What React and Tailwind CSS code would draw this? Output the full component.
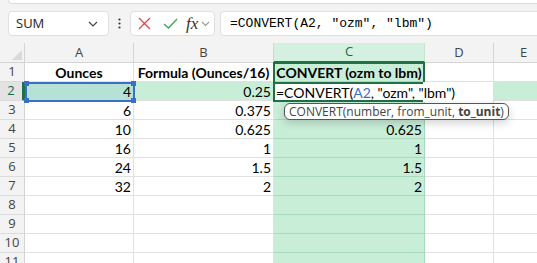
import React from 'react';

const cols = [
  { id: 'A', w: 109 },
  { id: 'B', w: 140 },
  { id: 'C', w: 151 },
  { id: 'D', w: 69 },
  { id: 'E', w: 60 },
];

const rows = [
  { n: 1, a: 'Ounces', b: 'Formula (Ounces/16)', c: 'CONVERT (ozm to lbm)', head: true },
  { n: 2, a: '4', b: '0.25', c: '' },
  { n: 3, a: '6', b: '0.375', c: '' },
  { n: 4, a: '10', b: '0.625', c: '0.625' },
  { n: 5, a: '16', b: '1', c: '1' },
  { n: 6, a: '24', b: '1.5', c: '1.5' },
  { n: 7, a: '32', b: '2', c: '2' },
  { n: 8 }, { n: 9 }, { n: 10 }, { n: 11 },
];

// fond de la cellule selon colonne / ligne
const cellBg = (col, n) => {
  if (col === 'C') return 'bg-[#c9eed8]';
  if (n === 2 && col === 'A') return 'bg-[#b6e2d6]';
  if (n === 2 && (col === 'B' || col === 'E')) return 'bg-[#c9eed8]';
  return 'bg-white';
};

const Cell = ({ col, row }) => {
  const val = row[col.id.toLowerCase()];
  const border = col.id === 'C' ? 'border-[#a8d8bd]' : 'border-[#e1e1e1]';
  return (
    <div
      className={`h-[19px] shrink-0 border-r border-b ${border} ${cellBg(col.id, row.n)} flex items-center ${row.head ? 'justify-center font-bold' : 'justify-end pr-[2px]'} text-[14px] text-black overflow-visible whitespace-nowrap`}
      style={{ width: col.w }}
    >
      {val}
    </div>
  );
};

export default function App() {
  return (
    <div className="relative w-[537px] h-[263px] overflow-hidden bg-white font-['Lato',sans-serif]">
      {/* barre supérieure */}
      <div className="h-[43px] bg-[#f3f3f3] flex flex-col">
        <div className="ml-2 h-[4px] rounded-bl-lg bg-white border border-t-0 border-r-0 border-[#dcdcdc]" />
        <div className="mt-[7px] flex items-center h-[25px]">
          <div className="ml-2 w-[101px] h-[25px] bg-white rounded-[4px] border border-[#e0e0e0] flex items-center justify-between pl-[7px] pr-[10px] font-['Open_Sans',sans-serif] text-[13px] text-[#222]">
            <span>SUM</span>
            <svg width="10" height="6" viewBox="0 0 10 6"><path d="M1 1l4 4 4-4" fill="none" stroke="#444" strokeWidth="1.2" /></svg>
          </div>
          <div className="w-[21px] flex justify-center">
            <svg width="3" height="11" viewBox="0 0 3 11"><circle cx="1.5" cy="1.5" r="1.1" fill="#333" /><circle cx="1.5" cy="5.5" r="1.1" fill="#333" /><circle cx="1.5" cy="9.5" r="1.1" fill="#333" /></svg>
          </div>
          <div className="w-[85px] h-[25px] bg-white rounded-[4px] border border-[#e0e0e0] flex items-center pl-[7px]">
            <svg width="13" height="13" viewBox="0 0 13 13"><path d="M1 1l11 11M12 1L1 12" stroke="#e0474c" strokeWidth="1.3" /></svg>
            <svg className="ml-[12px]" width="15" height="11" viewBox="0 0 15 11"><path d="M1 6l4.5 4L14 1" fill="none" stroke="#3aa757" strokeWidth="1.3" /></svg>
            <span className="ml-[8px] font-['Liberation_Serif',serif] italic text-[17px] text-[#333] leading-none">fx</span>
            <svg className="ml-[3px]" width="9" height="6" viewBox="0 0 9 6"><path d="M1 1l3.5 3.5L8 1" fill="none" stroke="#999" strokeWidth="1.1" /></svg>
          </div>
          <div className="ml-[5px] flex-1 h-[25px] bg-white rounded-l-[4px] border border-r-0 border-[#e0e0e0] flex items-center pl-[9px] font-['Liberation_Mono',monospace] text-[13px] text-black">
            =CONVERT(A2, "ozm", "lbm")
          </div>
        </div>
      </div>

      {/* en-têtes de colonnes */}
      <div className="flex h-[20px]">
        <div className="w-[25px] shrink-0 bg-[#f3f3f3] border-r border-b border-[#d4d4d4] relative">
          <svg className="absolute right-[2px] bottom-[2px]" width="10" height="10" viewBox="0 0 10 10"><path d="M10 0V10H0Z" fill="#dadada" /></svg>
        </div>
        {cols.map((c) => (
          <div
            key={c.id}
            className={`shrink-0 flex items-center justify-center font-['Open_Sans',sans-serif] text-[13px] border-r ${c.id === 'C' ? 'bg-[#d3f0e0] text-[#1d6b3e] border-b-2 border-b-[#1e7145] border-r-[#c7e3d2]' : 'bg-[#f3f3f3] text-[#444] border-b border-[#d4d4d4]'}`}
            style={{ width: c.w }}
          >
            {c.id}
          </div>
        ))}
      </div>

      {/* lignes */}
      {rows.map((r) => (
        <div key={r.n} className="flex">
          <div
            className={`w-[25px] h-[19px] shrink-0 flex items-center justify-center font-['Open_Sans',sans-serif] text-[13px] border-b border-[#dcdcdc] ${r.n === 2 ? 'bg-[#e3e3e3] text-[#1d6b3e] border-r-[3px] border-r-[#1e7145]' : 'bg-[#f3f3f3] text-[#444] border-r border-r-[#d4d4d4]'}`}
          >
            {r.n}
          </div>
          {cols.map((c) => (
            <Cell key={c.id} col={c} row={r} />
          ))}
        </div>
      ))}

      {/* sélection C1 */}
      <div className="absolute left-[273px] top-[62px] w-[152px] h-[21px] border-2 border-b-0 border-[#1e7145] pointer-events-none" />

      {/* référence A2 */}
      <div className="absolute left-[25px] top-[82px] w-[110px] h-[20px] border-2 border-[#3a6fc8] pointer-events-none">
        <div className="absolute -left-[3px] -top-[3px] w-[5px] h-[5px] bg-[#3a6fc8]" />
        <div className="absolute -right-[3px] -top-[3px] w-[5px] h-[5px] bg-[#3a6fc8]" />
        <div className="absolute -left-[3px] -bottom-[3px] w-[5px] h-[5px] bg-[#3a6fc8]" />
        <div className="absolute -right-[3px] -bottom-[3px] w-[5px] h-[5px] bg-[#3a6fc8]" />
      </div>

      {/* cellule en édition */}
      <div className="absolute left-[273px] top-[82px] w-[220px] h-[20px] bg-white flex items-center pl-[3px] text-[14px] text-black whitespace-nowrap">
        =CONVERT(<span className="text-[#3a6fc8]">A2</span>, "ozm", "lbm")
      </div>
      <div className="absolute left-[273px] top-[82px] w-[150px] h-[20px] border-2 border-r-0 border-[#1e7145] pointer-events-none" />

      {/* info-bulle */}
      <div className="absolute left-[284px] top-[103px] h-[17px] px-[4px] bg-white border border-[#555] rounded-[6px] shadow-[0_3px_8px_rgba(0,0,0,0.18)] flex items-center font-['Open_Sans',sans-serif] text-[12px] text-[#444] whitespace-nowrap leading-none">
        CONVERT(number, from_unit,&nbsp;<span className="font-bold">to_unit</span>)
      </div>
    </div>
  );
}
